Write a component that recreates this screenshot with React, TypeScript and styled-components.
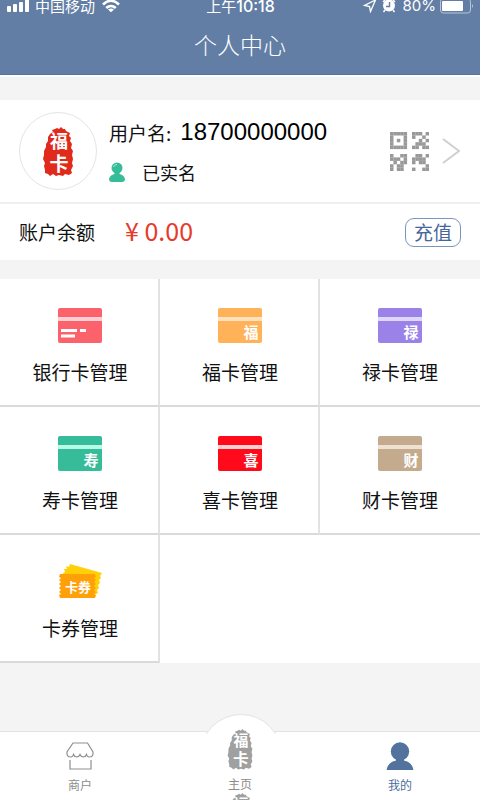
import React from "react";
import styled, { createGlobalStyle } from "styled-components";

const GlobalStyle = createGlobalStyle`
  * { box-sizing: border-box; }
  body {
    margin: 0;
    background: #f4f4f4;
    color: #111;
    font-family: "Noto Sans CJK SC", "Noto Sans", sans-serif;
  }
  button { font: inherit; color: inherit; background: none; border: 0; padding: 0; cursor: pointer; }
  svg { display: block; }
`;

const Page = styled.div`
  display: flex;
  flex-direction: column;
  min-height: 100vh;
  overflow: hidden;
`;

const Header = styled.header`
  background: #627ea5;
  color: #fff;
  border-bottom: 1px solid #5574a0;
  box-shadow: 0 2px 0 #fff;
`;

const StatusBar = styled.div`
  display: grid;
  grid-template-columns: 1fr auto 1fr;
  height: 14px;
  padding: 0 6px 0 7px;
  font-size: 15px;
  line-height: 12px;
`;

const StatusGroup = styled.div<{ $end?: boolean }>`
  display: flex;
  align-items: flex-start;
  justify-content: ${(p) => (p.$end ? "flex-end" : "flex-start")};
  gap: ${(p) => (p.$end ? 4 : 6)}px;
  white-space: nowrap;
`;

const Clock = styled.time`
  display: flex;
`;

const ClockDigits = styled.span`
  font-family: Inter, sans-serif;
  font-size: 16px;
  font-weight: 500;
`;

const Percent = styled.span`
  margin-left: 2px;
  font-family: Inter, sans-serif;
`;

const Title = styled.h1`
  margin: 0;
  height: 60px;
  line-height: 60px;
  font-size: 23px;
  font-weight: 300;
  text-align: center;
`;

const Account = styled.section`
  margin-top: 25px;
  background: #fff;
`;

const Profile = styled.div`
  display: flex;
  align-items: center;
  height: 104px;
  padding: 0 20px 0 19px;
  border-bottom: 2px solid #efeff0;
`;

const Avatar = styled.div`
  display: flex;
  align-items: center;
  justify-content: center;
  width: 78px;
  height: 78px;
  border: 1px solid #e4e4e4;
  border-radius: 50%;
`;

const UserInfo = styled.div`
  flex: 1;
  margin-left: 12px;
  padding-top: 2px;
`;

const UserLine = styled.div`
  display: flex;
  align-items: center;
  height: 40px;
  font-size: 19px;
  white-space: nowrap;
`;

const Phone = styled.span`
  margin-left: 9px;
  font-family: "Liberation Sans", Arial, sans-serif;
  font-size: 24px;
  color: #000;
`;

const Verified = styled.span`
  margin-left: 17px;
  font-size: 18px;
`;

const ProfileLink = styled.button`
  display: flex;
  align-items: center;
  gap: 13px;
`;

const Balance = styled.div`
  display: flex;
  align-items: center;
  height: 56px;
  padding: 0 19px;
  font-size: 19px;
  line-height: 28px;
`;

const Amount = styled.strong`
  flex: 1;
  margin-left: 30px;
  padding-bottom: 4px;
  font-size: 25px;
  font-weight: 400;
  color: #e63a2a;
`;

const Recharge = styled.button`
  && {
    height: 29px;
    padding: 0 8px;
    border: 1px solid #7896bf;
    border-radius: 9px;
    font-size: 19px;
    line-height: 26px;
    color: #46659a;
  }
`;

const Menu = styled.nav`
  display: grid;
  grid-template-columns: repeat(3, 1fr);
  margin-top: 19px;
  background: #fff;
`;

const MenuItem = styled.button`
  && {
    display: flex;
    flex-direction: column;
    align-items: center;
    height: 128px;
    padding: 29px 0 0 2px;
    border-right: 2px solid #e2e2e2;
    border-bottom: 2px solid #dadada;
    font-size: 19px;
    line-height: 28px;
  }
  &&:nth-child(3n) {
    padding-right: 2px;
    border-right: 0;
  }
`;

const MenuLabel = styled.span`
  margin-top: 15px;
`;

const TabBar = styled.nav`
  display: grid;
  grid-template-columns: repeat(3, 1fr);
  height: 69px;
  margin-top: auto;
  background: #fff;
  border-top: 1px solid #e2e2e2;
`;

const Tab = styled.button<{ $active?: boolean }>`
  && {
    position: relative;
    display: flex;
    flex-direction: column;
    align-items: center;
    justify-content: flex-start;
    padding-top: 10px;
    font-size: 12px;
    line-height: 18px;
    color: ${(p) => (p.$active ? "#4b6c9d" : "#8c8c8c")};
  }
`;

const TabLabel = styled.span`
  margin-top: 6px;
`;

const HomeTab = styled(Tab)`
  && {
    height: 104px;
    padding-top: 0;
    margin-top: -3px;
  }
  &&::before {
    content: "";
    position: absolute;
    top: -15px;
    left: 50%;
    width: 80px;
    height: 80px;
    margin-left: -40px;
    border: 1px solid #e2e2e2;
    border-radius: 50%;
    background: #fff;
    clip-path: inset(0 0 62px 0);
  }
  & > * { position: relative; }
`;

const HomeLabel = styled.span`
  margin-top: 5px;
`;

const sealOutline =
  "M12 2 L14 1 L16 2 L18 0 L20 2 L22 2 L23 4 L27 6 L26 9 L28 11 L27 14 L29 17 L28 21 L30 24 L29 28 L30 32 L29 36 L30 39 L28 43 L29 46 L26 48 L22 47 L20 49 L16 48 L13 49 L10 47 L7 49 L5 47 L2 46 L2 43 L1 39 L2 36 L0 32 L1 28 L1 24 L3 20 L3 17 L5 14 L5 10 L7 7 L10 5 L9 3 Z";

function Seal({ color, width, height }: { color: string; width: number; height: number }) {
  return (
    <svg width={width} height={height} viewBox="0 0 30 49" role="img" aria-label="福卡">
      <path d={sealOutline} fill={color} />
      <g fill="#fff" fontFamily="Noto Sans CJK SC, sans-serif" fontWeight="700" textAnchor="middle">
        <text x="16" y="21" fontSize="18">福</text>
        <text x="16" y="44" fontSize="19">卡</text>
      </g>
    </svg>
  );
}

function BankCard({ color, stripe, mark }: { color: string; stripe: string; mark?: string }) {
  return (
    <svg width="44" height="35" viewBox="0 0 44 35" aria-hidden="true">
      <rect width="44" height="35" rx="2" fill={color} />
      <rect y="9" width="44" height="4" fill={stripe} />
      {mark ? (
        <text x="33" y="30" textAnchor="middle" fontSize="15" fontWeight="700" fill="#fff" fontFamily="Noto Sans CJK SC, sans-serif">
          {mark}
        </text>
      ) : (
        <path d="M3 22.500h16M22 22.500h6M3 28h14" stroke="#fff" strokeWidth="3" />
      )}
    </svg>
  );
}

function Coupon() {
  return (
    <svg width="44" height="35" viewBox="0 0 44 35" aria-hidden="true">
      <path d="M12 0 L44 9 L42 12 L43 14 L41 16 L42 19 L40 21 L41 24 L39 26 L40 29 L36 31 L5 20 L6 12 L5 9 L7 8 L6 5 L9 5 L8 2 L11 3 Z" fill="#ffcf08" />
      <path d="M2 10 H37 L38 13 L36 14 L38 16 L36 18 L38 20 L36 22 L38 24 L36 26 L38 28 L36 30 L38 31 L37 34 H2 L1 31 L3 30 L1 28 L3 26 L1 24 L3 22 L1 20 L3 18 L1 16 L3 14 L1 13 Z" fill="#ffa008" />
      <text x="20" y="28" textAnchor="middle" fontSize="13" fontWeight="700" fill="#fff" fontFamily="Noto Sans CJK SC, sans-serif">卡券</text>
    </svg>
  );
}

const qrBlocks = [
  { x: 0, y: 0, rows: ["11111", "10001", "10101", "10001", "11111"] },
  { x: 22, y: 0, rows: ["11101", "10010", "00101", "01110", "11011"] },
  { x: 0, y: 22, rows: ["10011", "11101", "01011", "10110", "10110"] },
  { x: 22, y: 22, rows: ["01101", "11110", "10110", "00001", "10011"] },
];

function QrIcon() {
  return (
    <svg width="39" height="39" viewBox="0 0 39 39" aria-hidden="true" fill="#999">
      {qrBlocks.map((b) =>
        b.rows.map((row, r) =>
          [...row].map((bit, c) =>
            bit === "1" ? (
              <rect key={`${b.x}-${b.y}-${r}-${c}`} x={b.x + c * 3.4} y={b.y + r * 3.4} width="3.500" height="3.500" />
            ) : null
          )
        )
      )}
    </svg>
  );
}

const cards = [
  { label: "银行卡管理", color: "#fc626b", stripe: "#ffd0d3" },
  { label: "福卡管理", color: "#ffb257", stripe: "#ffe2bd", mark: "福" },
  { label: "禄卡管理", color: "#9a82e8", stripe: "#e0d8fb", mark: "禄" },
  { label: "寿卡管理", color: "#36bc98", stripe: "#b5fbe8", mark: "寿" },
  { label: "喜卡管理", color: "#ff0a1b", stripe: "#ffd0d0", mark: "喜" },
  { label: "财卡管理", color: "#c4ab8e", stripe: "#efe2d2", mark: "财" },
];

export default function App() {
  return (
    <Page>
      <GlobalStyle />
      <Header>
        <StatusBar>
          <StatusGroup>
            <svg width="22" height="13" viewBox="0 0 22 13" fill="#fff" aria-hidden="true">
              <rect x="0" y="6" width="4" height="6" rx="1" />
              <rect x="6" y="4" width="4" height="8" rx="1" />
              <rect x="12" y="2" width="4" height="10" rx="1" />
              <rect x="18" y="-2" width="4" height="14" rx="1" />
            </svg>
            <span>中国移动</span>
            <svg width="20" height="13" viewBox="0 0 20 13" fill="none" stroke="#fff" strokeWidth="2.600" aria-hidden="true">
              <path d="M2 4.500Q10 -3 18 4.500M5.200 8Q10 4 14.800 8" />
              <path d="M7 9.500Q10 7.500 13 9.500L10 12.200Z" fill="#fff" stroke="none" />
            </svg>
          </StatusGroup>
          <Clock>
            上午<ClockDigits>10:18</ClockDigits>
          </Clock>
          <StatusGroup $end>
            <svg width="14" height="13" viewBox="0 0 14 13" fill="none" stroke="#fff" strokeWidth="1.300" aria-hidden="true">
              <path d="M12.500 0L7.500 11.500L6.500 6.500L1.500 5.500Z" />
            </svg>
            <svg width="16" height="13" viewBox="0 0 16 13" aria-hidden="true">
              <circle cx="8" cy="5.500" r="6" fill="#fff" />
              <path d="M2 2L4 0M14 2L12 0M4 10L2.500 12M12 10L13.500 12" stroke="#fff" strokeWidth="1.500" />
              <path d="M8.500 2V6.500H5" fill="none" stroke="#627ea5" strokeWidth="1.400" />
            </svg>
            <Percent>80%</Percent>
            <svg width="34" height="14" viewBox="0 0 34 14" aria-hidden="true">
              <rect x="0.500" y="-1.500" width="30" height="14.500" rx="3" fill="none" stroke="#b8c6da" />
              <rect x="2" y="1" width="21" height="10" rx="1" fill="#fff" />
              <path d="M32 4Q34 6 32 8Z" fill="#b8c6da" />
            </svg>
          </StatusGroup>
        </StatusBar>
        <Title>个人中心</Title>
      </Header>

      <main>
        <Account>
          <Profile>
            <Avatar>
              <Seal color="#e12a1b" width={30} height={49} />
            </Avatar>
            <UserInfo>
              <UserLine>
                <span>用户名:</span>
                <Phone>18700000000</Phone>
              </UserLine>
              <UserLine>
                <svg width="16" height="20" viewBox="0 0 16 20" fill="#36bc98" aria-hidden="true">
                  <circle cx="8" cy="6" r="5.500" />
                  <path d="M5.500 10H10.500V12Q15 13 16 17Q16 20 13 20H3Q0 20 0 17Q1 13 5.500 12Z" />
                  <path d="M4.500 5Q5 2.500 8 2.500" stroke="#a8ead8" fill="none" />
                </svg>
                <Verified>已实名</Verified>
              </UserLine>
            </UserInfo>
            <ProfileLink aria-label="我的二维码">
              <QrIcon />
              <svg width="18" height="26" viewBox="0 0 18 26" fill="none" stroke="#cfcfcf" strokeWidth="2" aria-hidden="true">
                <path d="M1 1L17 13L1 25" />
              </svg>
            </ProfileLink>
          </Profile>
          <Balance>
            <span>账户余额</span>
            <Amount>¥ 0.00</Amount>
            <Recharge>充值</Recharge>
          </Balance>
        </Account>

        <Menu>
          {cards.map((card) => (
            <MenuItem key={card.label}>
              <BankCard color={card.color} stripe={card.stripe} mark={card.mark} />
              <MenuLabel>{card.label}</MenuLabel>
            </MenuItem>
          ))}
          <MenuItem>
            <Coupon />
            <MenuLabel>卡券管理</MenuLabel>
          </MenuItem>
        </Menu>
      </main>

      <TabBar>
        <Tab>
          <svg width="28" height="28" viewBox="0 0 28 28" fill="none" stroke="#8f8f8f" strokeWidth="1.200" aria-hidden="true">
            <path d="M7 1H21.500L27 10V12Q26.500 15 23.500 15Q21 15 20.500 12.500Q19.500 15 17.400 15Q15 15 14 12.500Q13 15 10.700 15Q8.500 15 7.500 12.500Q7 15 4.500 15Q1.500 15 1 12V10Z" />
            <path d="M4 18V27H25V18" />
          </svg>
          <TabLabel>商户</TabLabel>
        </Tab>
        <HomeTab>
          <Seal color="#a0a0a0" width={26} height={42} />
          <HomeLabel>主页</HomeLabel>
          <Seal color="#a0a0a0" width={26} height={42} />
        </HomeTab>
        <Tab $active>
          <svg width="28" height="28" viewBox="0 0 28 28" fill="#53739f" aria-hidden="true">
            <circle cx="14" cy="9.500" r="9.200" />
            <path d="M10 16H18V18.500Q26 20 27.500 28H0.500Q2 20 10 18.500Z" />
          </svg>
          <TabLabel>我的</TabLabel>
        </Tab>
      </TabBar>
    </Page>
  );
}
